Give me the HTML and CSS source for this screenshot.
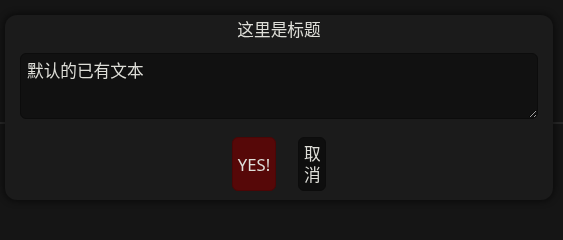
FILE: index.html
```html
<!DOCTYPE html>
<html lang="zh-CN">
<head>
<meta charset="utf-8">
<title>Dialog</title>
<link rel="stylesheet" href="styles.css">
</head>
<body>
<div class="page">
  <div class="rule"></div>
</div>
<div class="modal">
  <div class="modal-title">这里是标题</div>
  <textarea class="modal-input">默认的已有文本</textarea>
  <div class="modal-actions">
    <button class="btn btn-ok">YES!</button>
    <button class="btn btn-cancel">取消</button>
  </div>
</div>
</body>
</html>
```

FILE: styles.css
```css
html, body {
  margin: 0;
  padding: 0;
}
body {
  background: #151515;
  width: 563px;
  height: 216px;
  overflow: hidden;
  font-family: "Noto Sans", "Noto Sans CJK SC", sans-serif;
  color: #deded8;
}
.page {
  padding-top: 122px;
}
.rule {
  height: 2px;
  background: #272727;
}
.modal {
  position: fixed;
  top: 15px;
  left: 5px;
  width: 548px;
  height: 185px;
  box-sizing: border-box;
  background: #1b1b1b;
  border-radius: 12px;
  box-shadow: 0 0 6px 2px rgba(0, 0, 0, 0.45);
  padding: 3px 15px 0;
  display: flex;
  flex-direction: column;
}
.modal-title {
  text-align: center;
  font-size: 16.67px;
  line-height: 24px;
  color: #deded8;
}
.modal-input {
  margin: 11px 0 0;
  height: 66px;
  box-sizing: border-box;
  width: 100%;
  background: #111111;
  border: 1px solid #0c0c0c;
  border-radius: 6px;
  padding: 6px 6px;
  font-family: "Noto Sans", "Noto Sans CJK SC", sans-serif;
  font-size: 16.67px;
  line-height: 22px;
  color: #deded8;
  outline: none;
  color-scheme: dark;
}
.modal-actions {
  margin-top: 18px;
  display: flex;
  justify-content: center;
  gap: 22px;
}
.btn {
  margin: 0;
  border: 1px solid transparent;
  border-radius: 6px;
  font-family: "Noto Sans", "Noto Sans CJK SC", sans-serif;
  font-size: 16.67px;
  line-height: 21px;
  color: #deded8;
  padding: 5px 5px;
  height: 54px;
  box-sizing: border-box;
}
.btn-ok {
  width: 44px;
  background: #560808;
  border-color: #4a0606;
  padding: 0;
}
.btn-cancel {
  width: 28px;
  background: #0e0e0e;
  border-color: #0c0c0c;
  padding: 5px 5px;
  white-space: normal;
  word-break: break-all;
}
```
